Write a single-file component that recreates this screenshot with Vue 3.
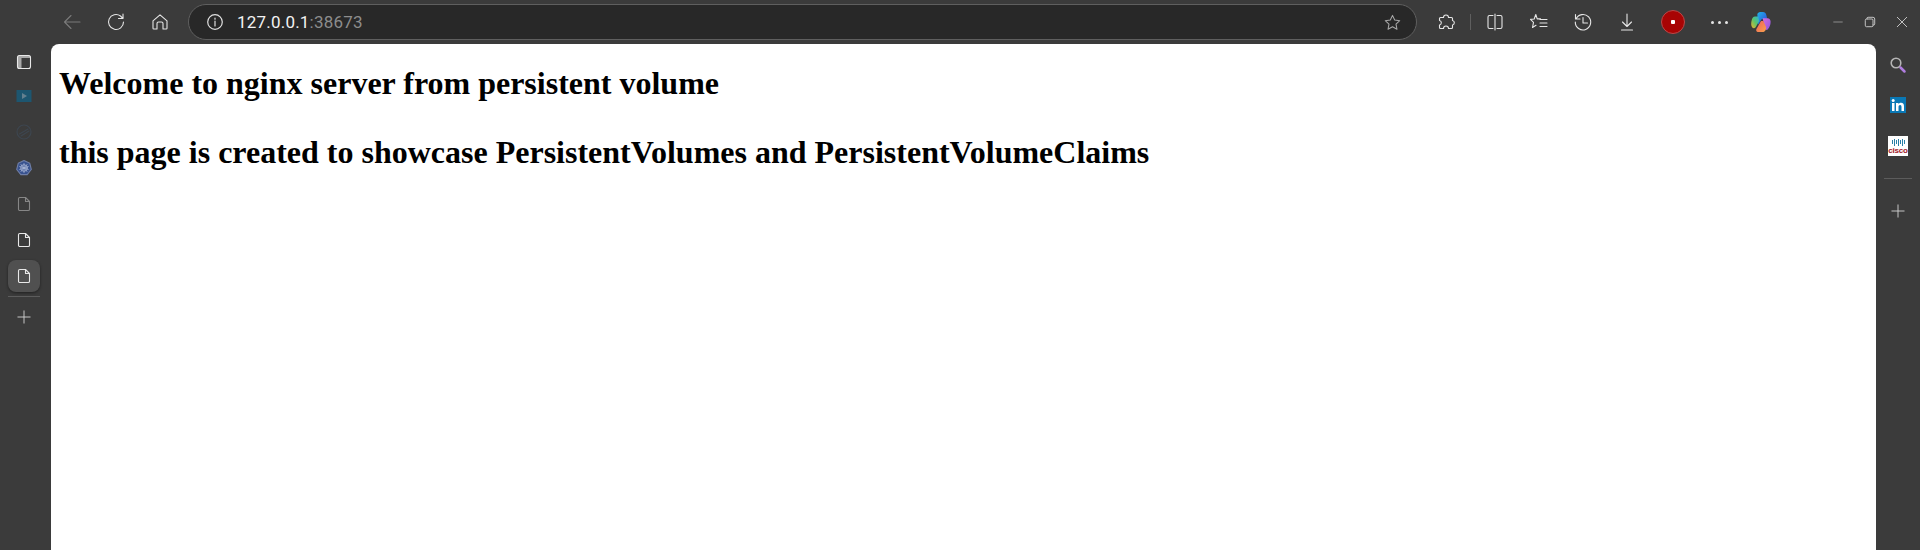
<template>
  <div class="browser">
    <header class="toolbar">
      <div class="nav">
        <svg class="icon dim" viewBox="0 0 20 20"><path d="M18 10H2.500M9 3.500 2.500 10 9 16.500" /></svg>
        <svg class="icon" viewBox="0 0 20 20"><path d="M17.500 10a7.500 7.500 0 1 1-3-6l2.500 2.500V2M17 6.500h-4.500" /></svg>
        <svg class="icon" viewBox="0 0 20 20"><path d="M3 8.800 10 2.800l7 6v7.400a.8.800 0 0 1-.8.8H13v-5.500a1.500 1.500 0 0 0-1.500-1.500h-3A1.500 1.500 0 0 0 7 11.500V17H3.800a.8.800 0 0 1-.8-.8Z" /></svg>
      </div>

      <div class="address">
        <svg class="info" viewBox="0 0 18 18">
          <circle cx="9" cy="9" r="7.300" />
          <path d="M9 8v5" />
          <path d="M9 5v1.200" />
        </svg>
        <span class="host">127.0.0.1</span><span class="port">:38673</span>
        <svg class="star" viewBox="0 0 20 20"><path d="m10 2.500 2.300 4.900 5.300.7-3.900 3.700 1 5.300-4.700-2.600-4.700 2.600 1-5.300L2.400 8.100l5.300-.7Z" /></svg>
      </div>

      <div class="tools">
        <svg class="icon" viewBox="0 0 20 20"><path d="M7.500 5.500a2.500 2.500 0 1 1 5 0H15.500a1 1 0 0 1 1 1V8.500a2.300 2.300 0 0 1 0 4.500V15.500a1 1 0 0 1-1 1H12.500a2.500 2.500 0 0 0-5 0H4.500a1 1 0 0 1-1-1V13a2.300 2.300 0 0 0 0-4.500V6.500a1 1 0 0 1 1-1Z" /></svg>
        <span class="sep"></span>
        <svg class="icon split" viewBox="0 0 20 20"><path d="M10 2v16M8 3.500H4.500A1.500 1.500 0 0 0 3 5v10a1.500 1.500 0 0 0 1.500 1.500H8M12 3.500h3.500A1.500 1.500 0 0 1 17 5v10a1.500 1.500 0 0 1-1.500 1.500H12" /></svg>
        <svg class="icon fav" viewBox="0 0 20 20"><path d="M11.500 6.800 8.200 6.900 6.800 2.500 5.200 7 1.500 7.400l3 2.900-1 5.200 3.500-2.200M11 7.500h7M11 11h7M11 14.500h7" /></svg>
        <svg class="icon hist" viewBox="0 0 20 20"><path d="M3 7A7.700 7.700 0 1 1 2.300 10M2.500 2.500V7H7M10 5.500V11h4.500" /></svg>
        <svg class="icon down" viewBox="0 0 20 20"><path d="M10 2V14.500M5.500 10l4.500 4.500 4.500-4.500M4.500 18h11" /></svg>
        <span class="avatar"><i></i></span>
        <span class="more"><i></i><i></i><i></i></span>
        <svg class="copilot" viewBox="0 0 24 24">
          <defs>
            <linearGradient id="cpA" x1="0" y1="0" x2="1" y2="1">
              <stop offset="0" stop-color="#1fb6e8" />
              <stop offset="0.6" stop-color="#2a6de0" />
              <stop offset="1" stop-color="#2434a8" />
            </linearGradient>
            <linearGradient id="cpB" x1="0" y1="1" x2="1" y2="0">
              <stop offset="0" stop-color="#f0b429" />
              <stop offset="0.5" stop-color="#5cc46a" />
              <stop offset="1" stop-color="#2bb3d8" />
            </linearGradient>
            <linearGradient id="cpC" x1="0" y1="0" x2="1" y2="1">
              <stop offset="0" stop-color="#d66ad8" />
              <stop offset="1" stop-color="#8a56e0" />
            </linearGradient>
            <linearGradient id="cpD" x1="0" y1="0" x2="1" y2="1">
              <stop offset="0" stop-color="#f0605a" />
              <stop offset="1" stop-color="#f8a24c" />
            </linearGradient>
          </defs>
          <path fill="url(#cpA)" d="M8 3.500c.5-1.500 1.500-2.500 3-2.500h3.200c1.800 0 3 1.200 3.500 3l1.300 5h-6.500L9 15Z" />
          <path fill="url(#cpB)" d="M9 6H5.500C3.500 6 2.500 7.500 2 9.500 1 13 1 16 2.500 18c1 1 2.600 1 3.700-.3L10 11Z" />
          <path fill="url(#cpC)" d="M14 8h5c2.200 0 3.500 1.500 3.500 4 0 3-1.300 6-3 8-.6.700-1.800.9-2.500.2L15 15Z" />
          <path fill="url(#cpD)" d="M7 19.500 12 11h2.500L17.500 17.500c.5 2-.7 5-2.800 5.500H9.500C7.500 23 6 21.500 7 19.500Z" />
        </svg>
      </div>

      <div class="window">
        <svg class="win dash" viewBox="0 0 14 14"><path d="M2 7h10" /></svg>
        <svg class="win" viewBox="0 0 14 14"><path d="M3.500 3.500V2.800A1.300 1.300 0 0 1 4.800 1.500H10.500A2 2 0 0 1 12.500 3.500V9.200A1.300 1.300 0 0 1 11.200 10.500H10.500M1.500 4.800A1.300 1.300 0 0 1 2.800 3.500H9.200A1.300 1.300 0 0 1 10.500 4.800V11.200A1.300 1.300 0 0 1 9.200 12.500H2.800A1.300 1.300 0 0 1 1.500 11.200Z" /></svg>
        <svg class="win" viewBox="0 0 14 14"><path d="M1.500 1.500l11 11M12.500 1.500l-11 11" /></svg>
      </div>
    </header>

    <div class="body-row">
      <aside class="left-bar">
        <svg class="side panel" viewBox="0 0 16 16">
          <path class="panel-fill" d="M2.500 1.500h11a1 1 0 0 1 1 1V4h-9v10.500h-3a1 1 0 0 1-1-1v-11a1 1 0 0 1 1-1Z" />
          <rect x="1.500" y="1.500" width="13" height="13" rx="2" />
        </svg>
        <svg class="side" viewBox="0 0 16 16">
          <rect class="media" x="0.500" y="2" width="15" height="12" />
          <path class="media-play" d="m6 5 5 3-5 3Z" />
        </svg>
        <svg class="side" viewBox="0 0 16 16">
          <circle class="faint" cx="8" cy="8" r="7" />
          <path class="faint" d="M3.500 10 12 5M5 12 13 7" />
        </svg>
        <svg class="side" viewBox="0 0 16 16">
          <path class="kube" d="M8 .500 13.800 3.300 15.300 9.500 11.200 14.600H4.800L.700 9.500 2.200 3.300Z" />
          <circle class="wheel" cx="8" cy="8" r="3.300" />
          <path class="wheel" d="M8 3.500v9M3.700 6.500l8.600 3M12.300 6.500l-8.600 3M5 11.500 11 4.500M11 11.500 5 4.500" />
        </svg>
        <svg class="side doc muted" viewBox="0 0 16 16"><path d="M2.500 2.800A1.300 1.300 0 0 1 3.800 1.500H9.500L13.500 5.500V13.200A1.300 1.300 0 0 1 12.200 14.500H3.800A1.300 1.300 0 0 1 2.500 13.200ZM9.500 1.500V5.500H13.500" /></svg>
        <svg class="side doc" viewBox="0 0 16 16"><path d="M2.500 2.800A1.300 1.300 0 0 1 3.800 1.500H9.500L13.500 5.500V13.200A1.300 1.300 0 0 1 12.200 14.500H3.800A1.300 1.300 0 0 1 2.500 13.200ZM9.500 1.500V5.500H13.500" /></svg>
        <div class="active-tab">
          <svg class="side doc" viewBox="0 0 16 16"><path d="M2.500 2.800A1.300 1.300 0 0 1 3.800 1.500H9.500L13.500 5.500V13.200A1.300 1.300 0 0 1 12.200 14.500H3.800A1.300 1.300 0 0 1 2.500 13.200ZM9.500 1.500V5.500H13.500" /></svg>
        </div>
        <span class="rule"></span>
        <svg class="plus" viewBox="0 0 16 16"><path d="M8 1v14M1 8h14" /></svg>
      </aside>

      <main class="page">
        <h1>Welcome to nginx server from persistent volume</h1>
        <h1 class="second">this page is created to showcase PersistentVolumes and PersistentVolumeClaims</h1>
      </main>

      <aside class="right-bar">
        <svg class="app" viewBox="0 0 18 18">
          <circle class="lens" cx="7" cy="7" r="4.800" />
          <path class="handle" d="m11.500 11.500 4 4" />
        </svg>
        <svg class="app" viewBox="0 0 18 18">
          <rect class="li-bg" x="1" y="1" width="16" height="16" />
          <rect class="li-fg" x="3" y="7" width="2.500" height="8" />
          <circle class="li-fg" cx="4.200" cy="4.500" r="1.500" />
          <path class="li-fg" d="M7 7h2.400v1.200c.5-.8 1.400-1.400 2.600-1.400 2.200 0 3 1.400 3 3.600V15h-2.500v-4c0-1.100-.4-1.900-1.400-1.900s-1.600.8-1.600 1.900v4H7Z" />
        </svg>
        <div class="cisco">
          <span class="bars"><i></i><i></i><i></i><i></i><i></i><i></i><i></i></span>
          <span class="cisco-name">cisco</span>
        </div>
        <span class="rule wide"></span>
        <svg class="plus" viewBox="0 0 16 16"><path d="M8 1v14M1 8h14" /></svg>
      </aside>
    </div>
  </div>
</template>

<script setup>
</script>

<style>
html,
body {
  margin: 0;
  background: #3b3b3b;
  overflow: hidden;
}
</style>

<style scoped>
.browser {
  width: 1920px;
  height: 550px;
  display: flex;
  flex-direction: column;
  background: #3b3b3b;
  overflow: hidden;
}

svg {
  display: block;
  fill: none;
  stroke-linecap: round;
  stroke-linejoin: round;
}

.toolbar {
  height: 44px;
  flex: none;
  display: flex;
  align-items: center;
}

.nav {
  display: flex;
  align-items: center;
  gap: 24px;
  padding-left: 62px;
  width: 188px;
  flex: none;
  box-sizing: border-box;
}

.icon {
  width: 20px;
  height: 20px;
  flex: none;
  stroke: #e6e6e6;
  stroke-width: 1.100;
}

.icon.dim {
  stroke: #7a7a7a;
}

.address {
  width: 1229px;
  height: 36px;
  flex: none;
  box-sizing: border-box;
  border: 1px solid #5f5f5f;
  border-radius: 18px;
  background: #282828;
  display: flex;
  align-items: center;
  padding-left: 17px;
  font-family: Roboto, "Liberation Sans", sans-serif;
  font-size: 17px;
  letter-spacing: 0.2px;
}

.info {
  width: 18px;
  height: 18px;
  margin-right: 13px;
  stroke: #e0e0e0;
  stroke-width: 1.200;
}

.host {
  color: #f2f2f2;
}

.port {
  color: #8d8d8d;
}

.star {
  width: 19px;
  height: 19px;
  margin-left: auto;
  margin-right: 14px;
  stroke: #a8a8a8;
  stroke-width: 1.100;
}

.tools {
  display: flex;
  align-items: center;
  margin-left: 19px;
}

.sep {
  width: 1px;
  height: 16px;
  background: #5f5f5f;
  margin: 0 14px;
}

.split,
.fav,
.hist,
.down {
  margin-right: 24px;
}

.avatar {
  width: 24px;
  height: 24px;
  box-sizing: border-box;
  border-radius: 50%;
  background: #a80404;
  border: 1px solid #b84a4a;
  display: flex;
  align-items: center;
  justify-content: center;
}

.avatar i {
  width: 4px;
  height: 4px;
  background: #fff;
  border-radius: 1px;
}

.more {
  display: flex;
  gap: 4px;
  margin-left: 26px;
}

.more i {
  width: 3px;
  height: 3px;
  border-radius: 50%;
  background: #e6e6e6;
}

.copilot {
  width: 22px;
  height: 24px;
  margin-left: 22px;
}

.window {
  display: flex;
  align-items: center;
  gap: 20px;
  margin-left: auto;
  padding-right: 12px;
}

.win {
  width: 12px;
  height: 12px;
  stroke: #d8d8d8;
  stroke-width: 1;
}

.win.dash {
  stroke: #9a9a9a;
}

.body-row {
  flex: 1;
  display: flex;
  min-height: 0;
}

.left-bar {
  width: 51px;
  flex: none;
  display: flex;
  flex-direction: column;
  align-items: center;
  padding: 10px 3px 0 0;
  box-sizing: border-box;
}

.side {
  width: 16px;
  height: 16px;
  flex: none;
  margin-bottom: 20px;
  stroke: #e8e8e8;
  stroke-width: 1.100;
}

.side.panel {
  margin-bottom: 18px;
}

.panel-fill {
  fill: #a8a8a8;
  stroke: none;
}

.media {
  fill: #1d5670;
  stroke: none;
}

.media-play {
  fill: #64808f;
  stroke: none;
}

.faint {
  stroke: #3d4650;
}

.kube {
  fill: #38528f;
  stroke: #6f7ea6;
}

.wheel {
  stroke: #a9b6d6;
  stroke-width: 0.800;
}

.doc.muted {
  stroke: #868686;
}

.active-tab {
  width: 32px;
  height: 32px;
  margin-top: -8px;
  flex: none;
  border-radius: 8px;
  background: #505050;
  box-shadow: 0 1px 3px rgba(0, 0, 0, 0.45);
  display: flex;
  align-items: center;
  justify-content: center;
}

.active-tab .side {
  margin-bottom: 0;
}

.rule {
  width: 32px;
  height: 1px;
  background: #5c5c5c;
  margin: 4px 0 13px;
  flex: none;
}

.plus {
  width: 14px;
  height: 14px;
  flex: none;
  stroke: #d8d8d8;
  stroke-width: 1;
}

.page {
  flex: 1;
  min-width: 0;
  background: #fff;
  border-radius: 8px 8px 0 0;
  padding: 21px 8px 0;
  box-sizing: border-box;
  color: #000;
  font-family: "Liberation Serif", "Times New Roman", serif;
}

h1 {
  margin: 0;
  font-size: 32px;
  font-weight: 700;
  line-height: 37px;
}

h1.second {
  margin-top: 32px;
}

.right-bar {
  width: 44px;
  flex: none;
  display: flex;
  flex-direction: column;
  align-items: center;
  padding-top: 12px;
  box-sizing: border-box;
}

.app {
  width: 18px;
  height: 18px;
  flex: none;
  margin-bottom: 22px;
}

.lens {
  stroke: #b5b5b5;
  stroke-width: 1.600;
}

.handle {
  stroke: #b07ee0;
  stroke-width: 2.500;
}

.li-bg {
  fill: #0a78b5;
}

.li-fg {
  fill: #fff;
}

.cisco {
  width: 20px;
  height: 20px;
  flex: none;
  background: #fff;
  display: flex;
  flex-direction: column;
  align-items: center;
  justify-content: center;
  overflow: hidden;
}

.bars {
  display: flex;
  align-items: center;
  gap: 1px;
  height: 9px;
}

.bars i {
  width: 1px;
  height: 4px;
  background: #2a7fa8;
}

.bars i:nth-child(even) {
  height: 7px;
}

.cisco-name {
  font-family: "Liberation Sans", Arial, sans-serif;
  font-size: 8px;
  font-weight: 700;
  line-height: 8px;
  letter-spacing: -0.2px;
  color: #a01525;
}

.rule.wide {
  width: 28px;
  margin: 22px 0 25px;
}
</style>
